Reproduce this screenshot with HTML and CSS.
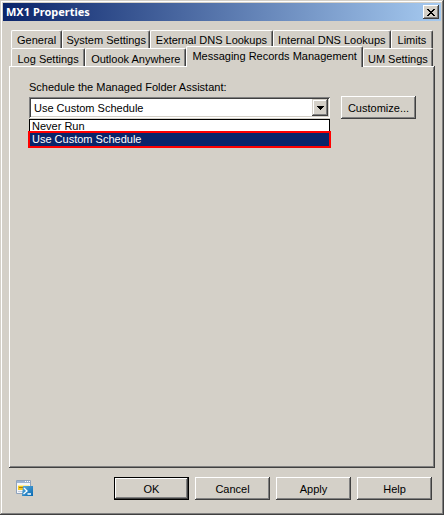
FILE: index.html
```html
<!DOCTYPE html>
<html lang="en">
<head>
<meta charset="utf-8">
<title>MX1 Properties</title>
<link rel="stylesheet" href="styles.css">
</head>
<body>
<main class="window">
  <header class="titlebar">
    <h1 class="title">MX1 Properties</h1>
    <button class="close" type="button" aria-label="Close">
      <svg width="8" height="7" viewBox="0 0 8 7" shape-rendering="crispEdges"><path d="M0 0h2v1h1v1h2v-1h1v-1h2v1h-1v1h-1v1h-1v1h1v1h1v1h1v1h-2v-1h-1v-1h-2v1h-1v1h-2v-1h1v-1h1v-1h1v-1h-1v-1h-1v-1h-1z"/></svg>
    </button>
  </header>

  <div class="content">
    <div role="tablist">
      <div class="tabs tabs-back">
        <button class="tab" type="button" role="tab">General</button>
        <button class="tab" type="button" role="tab">System Settings</button>
        <button class="tab" type="button" role="tab">External DNS Lookups</button>
        <button class="tab" type="button" role="tab">Internal DNS Lookups</button>
        <button class="tab" type="button" role="tab">Limits</button>
      </div>
      <div class="tabs tabs-front">
        <button class="tab" type="button" role="tab">Log Settings</button>
        <button class="tab" type="button" role="tab">Outlook Anywhere</button>
        <button class="tab tab-active" type="button" role="tab" aria-selected="true">Messaging Records Management</button>
        <button class="tab" type="button" role="tab">UM Settings</button>
      </div>
    </div>

    <section class="panel" role="tabpanel">
      <label class="label" for="schedule">Schedule the Managed Folder Assistant:</label>
      <div class="row">
        <div class="combo">
          <select class="select" id="schedule">
            <option>Never Run</option>
            <option selected>Use Custom Schedule</option>
          </select>
          <span class="arrow"><svg width="7" height="4" viewBox="0 0 7 4" shape-rendering="crispEdges"><path d="M0 0h7v1h-1v1h-1v1h-1v1h-1v-1h-1v-1h-1v-1h-1z"/></svg></span>
          <ul class="list">
            <li class="option">Never Run</li>
            <li class="option option-selected">Use Custom Schedule</li>
          </ul>
        </div>
        <button class="button" type="button">Customize...</button>
      </div>
    </section>

    <footer class="footer">
      <button class="shell" type="button" aria-label="Show command">
        <svg width="17" height="17" viewBox="0 0 17 17">
          <defs><linearGradient id="blue" x1="0" y1="0" x2="1" y2="1"><stop offset="0" stop-color="#5badde"/><stop offset="1" stop-color="#0869b2"/></linearGradient></defs>
          <path fill="#f4f6fa" stroke="#8fa3bd" d="M.5.5h14v13H.5z"/>
          <path fill="#9db4d3" d="M1 1h13v2H1z"/>
          <path fill="#fff" d="M9 1h1v1H9zM11 1h1v1h-1zM13 1h1v1h-1z"/>
          <path fill="#f5ca24" d="M2 5h11v5H2z"/>
          <path fill="#fff0a0" d="M2 5h11v1H2z"/>
          <path fill="#a67c13" d="M3 7h4v1H3z"/>
          <path fill="#c4ccd8" d="M2 11h5v1H2z"/>
          <path fill="url(#blue)" d="M7 6h10v10H6z"/>
          <path fill="none" stroke="#fff" stroke-width="1.3" d="M8 8l3 3-3.500 3M11.500 14H15"/>
        </svg>
      </button>
      <button class="button button-default" type="button">OK</button>
      <button class="button" type="button">Cancel</button>
      <button class="button" type="button">Apply</button>
      <button class="button" type="button">Help</button>
    </footer>
  </div>
</main>
</body>
</html>
```
FILE: styles.css
```css
:root {
  --face: #d4d0c8;
  --light: #fff;
  --shade: #808080;
  --dark: #404040;
  --navy: #0a246a;
}

* {
  box-sizing: border-box;
}

body {
  margin: 0;
  background: var(--face);
  color: #000;
  font: 11px/14px "Liberation Sans", Arial, sans-serif;
}

button,
select {
  margin: 0;
  border: 0;
  border-radius: 0;
  padding: 0;
  background: var(--face);
  color: inherit;
  font: inherit;
  white-space: nowrap;
}

.window {
  display: flex;
  flex-direction: column;
  min-height: 100vh;
  padding: 3px;
  box-shadow: inset -1px -1px var(--dark), inset 1px 1px var(--face),
    inset -2px -2px var(--shade), inset 2px 2px var(--light);
}

.titlebar {
  display: flex;
  align-items: center;
  justify-content: space-between;
  height: 18px;
  padding: 0 2px 0 3px;
  background: linear-gradient(to right, var(--navy), #a6caf0);
  color: #fff;
}

.title {
  margin: 0;
  font: bold 11px/18px "Noto Sans", Tahoma, sans-serif;
}

.close {
  display: grid;
  place-items: center;
  width: 16px;
  height: 14px;
  padding-right: 1px;
  color: #000;
  box-shadow: inset -1px -1px var(--dark), inset 1px 1px var(--light),
    inset -2px -2px var(--shade);
}

.content {
  display: flex;
  flex: 1;
  flex-direction: column;
  padding: 9px 6px 0;
}

.tabs {
  display: grid;
  height: 18px;
  margin: 0 2px;
}

.tabs-back {
  grid-template-columns: 51fr 88fr 122fr 118fr 42fr;
}

.tabs-front {
  grid-template-columns: 74fr 101fr 176fr 70fr;
}

.tab {
  border: solid;
  border-width: 1px 1px 0;
  border-color: var(--light) var(--dark) var(--light) var(--light);
  border-radius: 2px 2px 0 0;
  padding-top: 1px;
  box-shadow: inset -1px 0 var(--shade);
}

.tab-active {
  z-index: 1;
  height: 21px;
  margin-top: -2px;
  padding-bottom: 3px;
}

.panel {
  flex: 1;
  padding: 14px 19px 14px 20px;
  box-shadow: inset -1px -1px var(--dark), inset 1px 1px var(--light),
    inset -2px -2px var(--shade);
}

.label {
  display: block;
}

.row {
  display: flex;
  align-items: center;
  gap: 11px;
  margin-top: 2px;
}

.combo {
  position: relative;
  display: flex;
  flex: 1;
  height: 21px;
}

.select {
  flex: 1;
  appearance: none;
  padding: 0 20px 0 5px;
  background: #fff;
  box-shadow: inset 1px 1px var(--shade), inset -1px -1px var(--light),
    inset 2px 2px var(--dark), inset -2px -2px var(--face);
}

.arrow {
  position: absolute;
  top: 2px;
  right: 2px;
  display: grid;
  place-items: center;
  width: 16px;
  height: 17px;
  background: var(--face);
  box-shadow: inset -1px -1px var(--dark), inset 1px 1px var(--face),
    inset -2px -2px var(--shade), inset 2px 2px var(--light);
  pointer-events: none;
}

.list {
  position: absolute;
  top: calc(100% + 1px);
  left: 0;
  right: 0;
  margin: 0;
  border: 1px solid #000;
  border-bottom: 0;
  padding: 0;
  background: #fff;
  line-height: 13px;
  list-style: none;
}

.option {
  height: 11px;
  padding-left: 2px;
}

.option-selected {
  position: relative;
  height: 17px;
  margin: 0 -2px;
  border: 2px solid #f00;
  background: var(--navy);
  color: #fff;
}

.button {
  width: 75px;
  height: 23px;
  box-shadow: inset -1px -1px var(--dark), inset 1px 1px var(--light),
    inset -2px -2px var(--shade);
}

.button-default {
  border: 1px solid #000;
}

.footer {
  display: flex;
  align-items: center;
  gap: 6px;
  padding: 9px 3px 12px 7px;
}

.shell {
  display: flex;
  margin-right: auto;
}
```
